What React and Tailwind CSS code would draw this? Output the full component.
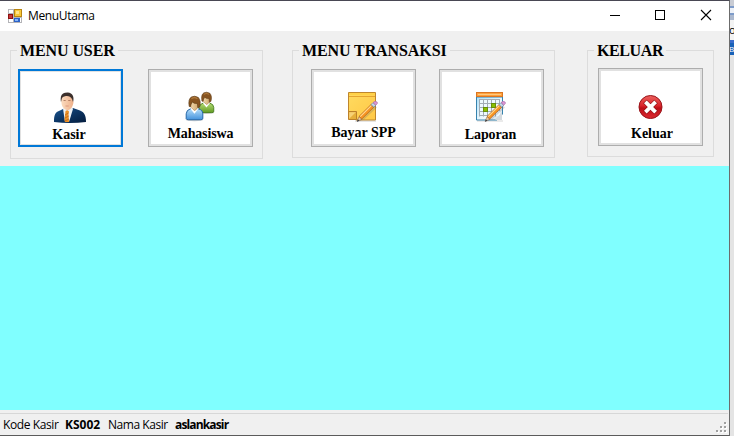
import React from "react";

function FormIcon() {
  return (
    <svg width="14" height="14" viewBox="0 0 14 14" shapeRendering="crispEdges">
      <rect width="14" height="14" fill="#b4b4b8" />
      <rect x="1" y="1" width="4" height="3" fill="#fff" />
      <rect x="1" y="10" width="4" height="3" fill="#fff" />
      <rect x="6" y="0" width="8" height="8" fill="#b88410" />
      <rect x="7" y="1" width="6" height="6" fill="#f8c838" />
      <rect x="8" y="2" width="3" height="3" fill="#ffe58c" />
      <rect x="0" y="5" width="5" height="5" fill="#8c1010" />
      <rect x="1" y="6" width="3" height="3" fill="#c83838" />
      <rect x="6" y="9" width="6" height="4" fill="#2c62c8" />
      <rect x="7" y="10" width="3" height="2" fill="#83b4f8" />
      <rect x="12" y="9" width="1" height="4" fill="#fff" />
    </svg>
  );
}

function CashierIcon() {
  return (
    <svg width="34" height="32" viewBox="0 0 34 32">
      <defs>
        <linearGradient id="suit" x1="0" y1="0" x2="1" y2="1">
          <stop offset="0" stopColor="#1c5590" />
          <stop offset="0.5" stopColor="#0b3564" />
          <stop offset="1" stopColor="#041c3c" />
        </linearGradient>
        <linearGradient id="face" x1="0" x2="1">
          <stop offset="0" stopColor="#fbdcc0" />
          <stop offset="1" stopColor="#eeb08a" />
        </linearGradient>
      </defs>
      <path d="M1 30C1 23 2 20 7 18.5L12 16H20L27 18.5C31 20 33 23 33 30Q17 32 1 30Z" fill="url(#suit)" />
      <path d="M10 16.5L13 14H18.5L20 17L16 30H12Z" fill="#eef2f5" />
      <path d="M12.5 19L14.5 18L16 19.5L15.5 22L16 30H12L11.5 28Z" fill="#ec9226" />
      <path d="M12 23L15.5 21M12 26L15.8 24M12 29L16 27" stroke="#b6601c" strokeWidth="0.7" />
      <path d="M8 8Q8 3.5 12 2.5Q18 1.5 19.3 6L20.5 10Q20 15 17 17.3L14.5 18.5Q10 16.5 8.8 13Z" fill="url(#face)" />
      <path d="M8 10Q6.5 2 12 .8Q18 -.8 20 4Q21 7 20 10L19 7Q17 3.5 13 4Q9 4.5 8.7 7Z" fill="#3c302c" />
      <path d="M10.5 8.5H12.7M15.2 8.5H17.5" stroke="#a56f54" strokeWidth="0.8" />
      <path d="M12.5 14H15.7" stroke="#d48d76" strokeWidth="0.8" />
    </svg>
  );
}

function Person({ x, y, scale, top, bottom, edge, id }) {
  return (
    <g transform={`translate(${x} ${y}) scale(${scale})`}>
      <linearGradient id={id} x1="0" y1="0" x2="0" y2="1">
        <stop offset="0" stopColor={top} />
        <stop offset="1" stopColor={bottom} />
      </linearGradient>
      <linearGradient id={`${id}-skin`} x1="0" y1="0" x2="1" y2="0">
        <stop offset="0" stopColor="#f8e0b4" />
        <stop offset="1" stopColor="#c9a066" />
      </linearGradient>
      <ellipse cx="9" cy="24" rx="9" ry="1.5" fill="#777" opacity="0.35" />
      <path d="M.7 23V18Q1 14 5 13H13Q17.3 14 17.5 18V23Q17 24 15 24H3Q1 24 .7 23Z" fill={`url(#${id})`} stroke={edge} strokeWidth="1" />
      <path d="M5 13L9 18L13 13L11 11H7Z" fill="#fff" />
      <path d="M4.3 6Q5 2 9 2Q13.5 2 13.8 7Q13.5 12 9.5 14.8Q4.7 12 4.3 7Z" fill={`url(#${id}-skin)`} stroke="#a17442" strokeWidth="0.5" />
      <path d="M3.7 10.5Q2.4 3 6 1Q9 -.8 13 1.5Q16 5 14.2 11L12.5 12L12 7.5Q8.5 8 7 6Q5.5 8 5 11Z" fill="#875420" stroke="#5b3913" strokeWidth="0.6" />
      <path d="M6 2.8Q9 .5 12 2.8" fill="none" stroke="#b27b3b" strokeWidth="1.2" />
    </g>
  );
}

function StudentsIcon() {
  return (
    <svg width="30" height="31" viewBox="0 0 30 31">
      <Person id="green" x={13.7} y={1} scale={0.86} top="#b5dc76" bottom="#629b22" edge="#41791a" />
      <Person id="blue" x={0.5} y={5} scale={0.99} top="#b6defa" bottom="#4392dc" edge="#2264a5" />
    </svg>
  );
}

function Pencil() {
  return (
    <g>
      <path d="M10 30L13 25L26 12L30 15.5L17 27.5Z" fill="#6b6b70" opacity="0.25" />
      <path d="M10.2 29.3L12 24.6L15 27.2Z" fill="#efcba0" stroke="#795c46" strokeWidth="0.5" />
      <path d="M9.9 29.8L10.9 27.2L12.4 28.7Z" fill="#383c44" />
      <path d="M12 24.4L24 12.6L26.8 15.2L14.8 27Z" fill="#f79423" stroke="#a95a16" strokeWidth="0.6" />
      <path d="M13.2 24.6L24.5 13.4" stroke="#ffdb92" strokeWidth="1.1" />
      <path d="M24 12.6L26 10.6L28.8 13.2L26.8 15.2Z" fill="#c3d6e7" stroke="#5a7897" strokeWidth="0.6" />
      <path d="M26 10.6Q28 8.4 30.2 10Q31.3 11.5 28.8 13.2Z" fill="#d895d2" stroke="#a15e9b" strokeWidth="0.5" />
    </g>
  );
}

function NoteIcon() {
  return (
    <svg width="32" height="32" viewBox="0 0 32 32">
      <defs>
        <linearGradient id="note" x1="0" y1="0" x2="1" y2="1">
          <stop offset="0" stopColor="#ffdb60" />
          <stop offset="1" stopColor="#ffc845" />
        </linearGradient>
      </defs>
      <path d="M8 29H29" stroke="#999" strokeWidth="1" opacity="0.5" />
      <path d="M1.5 .5H28.5V28H9L1.5 20Z" fill="url(#note)" stroke="#bf872c" />
      <path d="M2 4.5H28" stroke="#e4a42f" />
      <path d="M2 2H28" stroke="#ffd147" strokeWidth="2" />
      <path d="M1.5 19.5H9.5V27.5H1.5Z" fill="#e6af3a" stroke="#bd812a" />
      <path d="M2.2 20.2H8.8L2.2 26.8Z" fill="#f7d276" />
      <Pencil />
    </svg>
  );
}

function CalendarIcon() {
  return (
    <svg width="32" height="32" viewBox="0 0 32 32">
      <defs>
        <linearGradient id="page" x1="0" y1="0" x2="1" y2="1">
          <stop offset="0" stopColor="#afe0f8" />
          <stop offset="0.65" stopColor="#f6fcff" />
          <stop offset="1" stopColor="#c4d3dc" />
        </linearGradient>
      </defs>
      <path d="M2 29H28" stroke="#999" opacity="0.4" />
      <path d="M1.5 5V28H22L27.5 22V5Z" fill="url(#page)" stroke="#3783ae" />
      <rect x="1.5" y=".5" width="26" height="4" fill="#ffa13a" stroke="#db7622" />
      <path d="M3 2.5H26" stroke="#ffc981" />
      <path d="M4 8H25V24H4Z" fill="#edf9ff" />
      <path d="M4.5 7.5V24.5M8.5 7.5V24.5M12.5 7.5V24.5M16.5 7.5V24.5M20.5 7.5V24.5M24.5 7.5V19M4 7.5H25M4 11.5H25M4 15.5H25M4 19.5H23M4 23.5H18" stroke="#a1acb5" />
      <rect x="8.5" y="15.5" width="4" height="4" fill="#8bbf00" stroke="#668f0c" />
      <rect x="16.5" y="11.5" width="4" height="4" fill="#8bbf00" stroke="#668f0c" />
      <path d="M20 28L27 20V28Z" fill="#d4dade" />
      <Pencil />
    </svg>
  );
}

function ExitIcon() {
  return (
    <svg width="26" height="26" viewBox="0 0 26 26">
      <defs>
        <linearGradient id="exit" x1="0" y1="0" x2="0" y2="1">
          <stop offset="0" stopColor="#ed625f" />
          <stop offset="0.45" stopColor="#d9232a" />
          <stop offset="0.55" stopColor="#bd0e17" />
          <stop offset="1" stopColor="#dc2930" />
        </linearGradient>
      </defs>
      <circle cx="12.5" cy="12" r="11.5" fill="url(#exit)" stroke="#98151a" />
      <path d="M8.7 8.2L16.3 15.8M16.3 8.2L8.7 15.8" stroke="#8c1518" strokeWidth="5" strokeLinecap="square" />
      <path d="M8.7 8.2L16.3 15.8M16.3 8.2L8.7 15.8" stroke="#fff" strokeWidth="3.8" strokeLinecap="square" />
    </svg>
  );
}

function Group({ title, className, legendClass, children }) {
  return (
    <section className={`flex shrink-0 flex-col items-start border border-[#dcdcdc] ${className}`}>
      <h2 className={`-mt-[10px] ml-[6px] h-[20px] shrink-0 whitespace-nowrap bg-[#f0f0f0] pl-[3px] text-[16px] leading-[20px] font-bold ${legendClass}`}>
        {title}
      </h2>
      {children}
    </section>
  );
}

function MenuButton({ icon, label, focused, className = "", iconClass, labelClass }) {
  return (
    <button
      className={`flex h-[78px] w-[105px] shrink-0 flex-col items-center bg-white ${
        focused ? "border-2 border-[#0078d7]" : "border border-[#adadad]"
      } ${className}`}
    >
      <span className={`flex w-full flex-1 flex-col items-center ${focused ? "border border-[#e1e1e1]" : "border-2 border-[#e1e1e1]"}`}>
        <span className={`flex h-[31px] shrink-0 ${iconClass}`}>{icon}</span>
        <span className={`h-[14px] text-[14px] leading-[16px] font-bold whitespace-nowrap ${labelClass}`}>{label}</span>
      </span>
    </button>
  );
}

export default function App() {
  return (
    <div className="flex h-[436px] w-[734px] overflow-hidden bg-[#e6e6e6] font-['Liberation_Serif',serif] text-black">
      <div className="flex w-[730px] shrink-0 flex-col border-t border-r border-b border-t-[#494854] border-r-[#6c6c6c] border-b-[#5b5b5b] bg-[#f0f0f0]">
        <header className="flex h-[30px] shrink-0 items-center bg-white pl-[8px] font-['Open_Sans',sans-serif]">
          <FormIcon />
          <h1 className="ml-[6px] text-[12px] leading-[16px] tracking-[-0.35px]">MenuUtama</h1>
          <svg className="ml-auto" width="119" height="30" viewBox="0 0 119 30" fill="none" stroke="#000">
            <path d="M0 14.5H10M45.5 9.5H54.5V18.5H45.5Z" shapeRendering="crispEdges" />
            <path d="M91 9L101 19M101 9L91 19" strokeWidth="1.1" />
          </svg>
        </header>

        <nav className="flex h-[135px] shrink-0 items-start pt-[19px] pl-[10px]">
          <Group title="MENU USER" className="h-[109px] w-[253px]" legendClass="w-[101px] tracking-[-0.1px]">
            <div className="mt-[8px] ml-[7px] flex gap-[25px]">
              <MenuButton focused label="Kasir" icon={<CashierIcon />} iconClass="mt-[20px] mr-[1px]" labelClass="mt-[4px] mr-[3px]" />
              <MenuButton label="Mahasiswa" icon={<StudentsIcon />} iconClass="mt-[19px] mr-[2px]" labelClass="mt-[4px] tracking-[-0.15px]" />
            </div>
          </Group>
          <Group title="MENU TRANSAKSI" className="ml-[29px] h-[108px] w-[263px]" legendClass="w-[151px] tracking-[-0.1px]">
            <div className="mt-[8px] ml-[18px] flex gap-[23px]">
              <MenuButton label="Bayar SPP" icon={<NoteIcon />} iconClass="mt-[20px] mr-[2px]" labelClass="mt-[2px]" />
              <MenuButton label="Laporan" icon={<CalendarIcon />} iconClass="mt-[20px] mr-[2px]" labelClass="mt-[4px] mr-[2px] tracking-[-0.1px]" />
            </div>
          </Group>
          <Group title="KELUAR" className="ml-[32px] h-[107px] w-[127px]" legendClass="w-[72px] tracking-[-0.4px]">
            <MenuButton className="mt-[7px] ml-[10px]" label="Keluar" icon={<ExitIcon />} iconClass="mt-[24px]" labelClass="mt-0 mr-[-3px]" />
          </Group>
        </nav>

        <main className="h-[244px] shrink-0 bg-[#80ffff]" />

        <footer className="flex flex-1 flex-col pt-[3px] font-['Open_Sans',sans-serif] text-[12px]">
          <div className="h-px w-[728px] shrink-0 bg-[#d7d7d7]" />
          <div className="flex flex-1 items-center pl-[3px] leading-[16px] whitespace-nowrap">
            <span className="w-[62px] tracking-[-0.4px]">Kode Kasir</span>
            <b className="w-[43px]">KS002</b>
            <span className="w-[67px] tracking-[-0.45px]">Nama Kasir</span>
            <b className="tracking-[-0.85px]">aslankasir</b>
            <svg className="mt-[5px] mr-[2px] ml-auto" width="11" height="11" viewBox="0 0 11 11" shapeRendering="crispEdges">
              <path fill="#fff" d="M9 1h2v2h-2zM5 5h2v2h-2zM9 5h2v2h-2zM1 9h2v2h-2zM5 9h2v2h-2zM9 9h2v2h-2z" />
              <path fill="#a0a0a0" d="M8 0h2v2h-2zM4 4h2v2h-2zM8 4h2v2h-2zM0 8h2v2h-2zM4 8h2v2h-2zM8 8h2v2h-2z" />
            </svg>
          </div>
        </footer>
      </div>

      <aside className="flex w-[4px] shrink-0 flex-col overflow-hidden bg-[#e4e4e4] font-['Open_Sans',sans-serif]">
        <div className="h-[6px] shrink-0 bg-[#c9ccd4]" />
        <div className="h-[9px] shrink-0 border-y-2 border-[#7d9bc9] bg-[#edf1f7]" />
        <div className="h-[5px] shrink-0 bg-[#abb8ce]" />
        <div className="h-[20px] shrink-0 bg-[#f3f3f3] pt-[3px] text-[11px] leading-[14px] tracking-[-2px]">
          <span className="-ml-[1px]">o</span>
        </div>
        <div className="h-[3px] shrink-0 bg-[#3b6bcb]" />
        <div className="h-[12px] shrink-0 bg-[#1962b8] text-[8px] leading-[11px] text-white">
          <span className="-ml-[1px]">B</span>
        </div>
      </aside>
    </div>
  );
}
